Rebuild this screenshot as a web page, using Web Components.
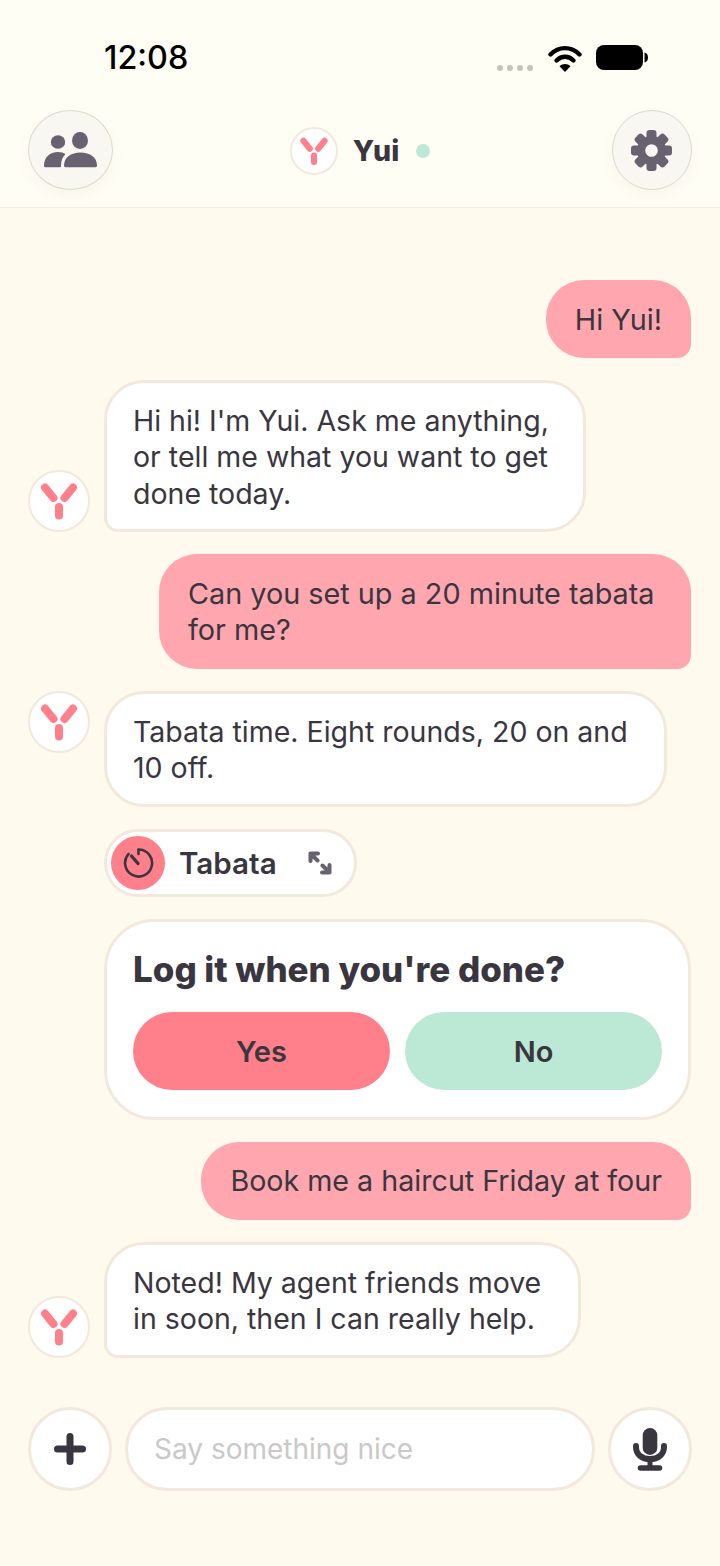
<!DOCTYPE html>
<html>
<head>
<meta charset="utf-8">
<style>
  html, body { margin: 0; padding: 0; }
  body {
    width: 720px;
    height: 1566px;
    overflow: hidden;
    background: #fff9ee;
    color: #3a3640;
    font-family: "Inter", "Liberation Sans", sans-serif;
  }
  chat-thread {
    display: flex;
    flex-direction: column;
    gap: 22px;
    padding: 72px 29px 49.500px 28px;
  }
</style>
</head>
<body>
  <top-bar></top-bar>
  <chat-thread>
    <chat-bubble from="user">Hi Yui!</chat-bubble>
    <bot-row avatar="end"><chat-bubble style="--w:482px" tail="bl">Hi hi! I'm Yui. Ask me anything, or tell me what you want to get done today.</chat-bubble></bot-row>
    <chat-bubble from="user" style="--w:532px">Can you set up a 20 minute tabata for me?</chat-bubble>
    <bot-row avatar="start"><chat-bubble style="--w:563px">Tabata time. Eight rounds, 20 on and 10 off.</chat-bubble></bot-row>
    <bot-row><tool-chip>Tabata</tool-chip></bot-row>
    <bot-row><log-card>Log it when you're done?</log-card></bot-row>
    <chat-bubble from="user" style="--fs:28.650px">Book me a haircut Friday at four</chat-bubble>
    <bot-row avatar="end"><chat-bubble style="--w:477px" tail="bl">Noted! My agent friends move in soon, then I can really help.</chat-bubble></bot-row>
  </chat-thread>
  <chat-composer></chat-composer>

<script>
class YuiAvatar extends HTMLElement {
  constructor () {
    super()
    this.shadow = this.attachShadow({ mode: 'open' })
  }
  connectedCallback () {
    this.shadow.innerHTML = /*html*/`
    <style>
      :host {
        display: block;
        flex: none;
        width: var(--size, 62px);
        height: var(--size, 62px);
        box-sizing: border-box;
        background: #fff;
        border: 2px solid #f2e9dc;
        border-radius: 50%;
      }
      svg { display: block; width: 100%; height: 100%; }
    </style>
    <svg viewBox="2 2 58 58" fill="none" stroke="#ff7f8a" stroke-width="8" stroke-linecap="round">
      <path d="M17 17.500 25.500 28"/>
      <path d="M45 17.500 36.500 28"/>
      <path d="M31 37V45.500"/>
    </svg>`
  }
}

class TopBar extends HTMLElement {
  constructor () {
    super()
    this.shadow = this.attachShadow({ mode: 'open' })
  }
  connectedCallback () {
    this.shadow.innerHTML = /*html*/`
    <style>
      :host {
        display: block;
        height: 207px;
        background: #fffef5;
        border-bottom: 1px solid #f3efe6;
      }
      .status {
        height: 110px;
        display: flex;
        justify-content: space-between;
        align-items: flex-start;
        padding: 0 72px 0 104px;
        box-sizing: border-box;
      }
      .time {
        margin-top: 39px;
        font-size: 32.300px;
        line-height: 38px;
        font-weight: 550;
        color: #000;
      }
      .sys { display: flex; align-items: flex-start; margin-top: 45px; }
      .dots { display: flex; gap: 4px; margin: 20px 15px 0 0; }
      .dots i { width: 6px; height: 6px; border-radius: 50%; background: #c5c5bb; }
      .wifi { margin-right: 14px; }
      .nav {
        display: flex;
        justify-content: space-between;
        align-items: center;
        padding: 0 28px;
        height: 80px;
      }
      .btn {
        width: 80px;
        height: 80px;
        box-sizing: border-box;
        border: 1px solid #dcdad0;
        border-radius: 50%;
        background: #f8f7f1;
        box-shadow: 0 6px 14px rgba(90, 80, 60, 0.05);
        display: flex;
        align-items: center;
        justify-content: center;
      }
      .btn.wide { width: 85px; }
      .title {
        display: flex;
        align-items: center;
        margin-left: -5px;
        margin-top: 1px;
        font-size: 28.500px;
        font-weight: 800;
        --size: 48px;
      }
      .title span { margin-left: 15px; }
      .title i { width: 14px; height: 14px; border-radius: 50%; background: #bce9d5; margin-left: 17px; }
    </style>
    <div class="status">
      <div class="time">12:08</div>
      <div class="sys">
        <div class="dots"><i></i><i></i><i></i><i></i></div>
        <svg class="wifi" width="34" height="27" viewBox="0 0 34 27" fill="none" stroke="#000" stroke-width="4.400" stroke-linecap="round">
          <path d="M2.500 9.500C10.500 1 23.500 1 31.500 9.500"/>
          <path d="M8.500 15.500C13.500 10.500 20.500 10.500 25.500 15.500"/>
          <path d="M17 27 11.500 21.200C14.500 18.400 19.500 18.400 22.500 21.200Z" fill="#000" stroke="none"/>
        </svg>
        <svg width="52" height="25" viewBox="0 0 52 25">
          <rect width="47" height="25" rx="8" fill="#000"/>
          <path d="M48.500 7.500C51 8.200 52 10 52 12.500S51 16.800 48.500 17.500Z" fill="#000"/>
        </svg>
      </div>
    </div>
    <div class="nav">
      <div class="btn wide">
        <svg width="54" height="36" viewBox="0 0 54 36" fill="#686170">
          <ellipse cx="14" cy="10" rx="7.200" ry="6.800"/>
          <ellipse cx="36" cy="8.500" rx="8" ry="8.500"/>
          <path d="M0 34C0 25 6 20 14 20C17 20 19.500 20.700 21.400 22C18.500 25 17 29 17 34C17 35 16.500 35.200 16 35.200H1C.3 35.200 0 34.800 0 34Z"/>
          <path d="M20 33.500C20 25.500 27 20.500 36.500 20.500S53 25.500 53 33.500C53 34.800 52.300 35.200 51.500 35.200H21.500C20.600 35.200 20 34.700 20 33.500Z"/>
        </svg>
      </div>
      <div class="title">
        <yui-avatar></yui-avatar>
        <span>Yui</span>
        <i></i>
      </div>
      <div class="btn">
        <svg width="41" height="41" viewBox="0 0 41 41" fill="#686170">
          <circle cx="20.500" cy="20.500" r="14.500"/>
          <rect x="15.500" y="0" width="10" height="41" rx="3"/>
          <rect x="15.500" y="0" width="10" height="41" rx="3" transform="rotate(45 20.500 20.500)"/>
          <rect x="15.500" y="0" width="10" height="41" rx="3" transform="rotate(90 20.500 20.500)"/>
          <rect x="15.500" y="0" width="10" height="41" rx="3" transform="rotate(135 20.500 20.500)"/>
          <circle cx="20.500" cy="20.500" r="6.300" fill="#f8f7f1"/>
        </svg>
      </div>
    </div>`
  }
}

class ChatBubble extends HTMLElement {
  constructor () {
    super()
    this.shadow = this.attachShadow({ mode: 'open' })
  }
  connectedCallback () {
    this.shadow.innerHTML = /*html*/`
    <style>
      :host {
        display: block;
        box-sizing: border-box;
        width: var(--w, fit-content);
        padding: 19.400px 26px 17.400px;
        background: #fff;
        border: 3px solid #f2e9dc;
        border-radius: 40px;
        font-size: 28.500px;
        line-height: 36.400px;
        color: #3a3640;
      }
      :host([tail="bl"]) { border-bottom-left-radius: 14px; }
      :host([from="user"]) {
        align-self: flex-end;
        padding: 21.700px 29px 20.300px;
        font-size: var(--fs, 28.800px);
        background: #ffa6ae;
        border: 0;
        border-radius: 38px 38px 14px 38px;
      }
    </style>
    <slot></slot>`
  }
}

class BotRow extends HTMLElement {
  constructor () {
    super()
    this.shadow = this.attachShadow({ mode: 'open' })
  }
  connectedCallback () {
    const place = this.getAttribute('avatar')
    this.shadow.innerHTML = /*html*/`
    <style>
      :host { display: flex; gap: 14px; align-items: ${place == 'start' ? 'flex-start' : 'flex-end'}; }
      .spacer { width: 62px; flex: none; }
    </style>
    ${place ? '<yui-avatar></yui-avatar>' : '<div class="spacer"></div>'}
    <slot></slot>`
  }
}

class ToolChip extends HTMLElement {
  constructor () {
    super()
    this.shadow = this.attachShadow({ mode: 'open' })
  }
  connectedCallback () {
    this.shadow.innerHTML = /*html*/`
    <style>
      :host {
        display: flex;
        align-items: center;
        box-sizing: border-box;
        width: 253px;
        height: 68px;
        padding: 0 22px 0 4px;
        background: #fff;
        border: 3px solid #f2e9dc;
        border-radius: 34px;
        font-size: 29.600px;
        font-weight: 600;
      }
      .icon {
        width: 54px;
        height: 54px;
        border-radius: 50%;
        background: #ff7f8a;
        display: flex;
        align-items: center;
        justify-content: center;
        flex: none;
      }
      .name { flex: 1; margin-left: 14px; }
    </style>
    <div class="icon">
      <svg width="32" height="32" viewBox="0 0 32 32" fill="none" stroke="#3a3640" stroke-width="2.600" stroke-linecap="round" stroke-linejoin="round">
        <path d="M16.500 2.500A13.500 13.500 0 1 1 6.500 7"/>
        <path d="M16.500 3V7"/>
        <path d="M9.500 9 16 16.500" stroke-width="3.400"/>
      </svg>
    </div>
    <div class="name"><slot></slot></div>
    <svg width="24" height="24" viewBox="0 0 24 24" fill="none" stroke="#686170" stroke-width="4" stroke-linecap="round" stroke-linejoin="round">
      <path d="M2.500 10V2.500H10M2.500 2.500 9.500 9.500"/>
      <path d="M21.500 14V21.500H14M21.500 21.500 14.500 14.500"/>
    </svg>`
  }
}

class LogCard extends HTMLElement {
  constructor () {
    super()
    this.shadow = this.attachShadow({ mode: 'open' })
  }
  connectedCallback () {
    this.shadow.innerHTML = /*html*/`
    <style>
      :host {
        display: block;
        box-sizing: border-box;
        width: 587px;
        height: 201px;
        padding: 26px 26px;
        background: #fff;
        border: 3px solid #f2e9dc;
        border-radius: 50px;
      }
      .title { font-size: 34.950px; line-height: 42px; font-weight: 800; white-space: nowrap; }
      .actions { display: grid; grid-template-columns: 1fr 1fr; gap: 15px; margin-top: 22px; }
      .actions div {
        box-sizing: border-box;
        height: 78px;
        padding-top: 2px;
        border-radius: 39px;
        display: flex;
        align-items: center;
        justify-content: center;
        font-size: 29px;
        font-weight: 600;
      }
      .yes { background: #ff7f8a; }
      .no { background: #bce9d5; }
    </style>
    <div class="title"><slot></slot></div>
    <div class="actions">
      <div class="yes">Yes</div>
      <div class="no">No</div>
    </div>`
  }
}

class ChatComposer extends HTMLElement {
  constructor () {
    super()
    this.shadow = this.attachShadow({ mode: 'open' })
  }
  connectedCallback () {
    this.shadow.innerHTML = /*html*/`
    <style>
      :host {
        display: flex;
        gap: 13px;
        padding: 0 28px;
        height: 84px;
      }
      .round, .input {
        box-sizing: border-box;
        height: 84px;
        background: #fff;
        border: 3px solid #f2e9dc;
        display: flex;
        align-items: center;
      }
      .round { width: 84px; border-radius: 50%; justify-content: center; flex: none; }
      .input {
        flex: 1;
        border-radius: 42px;
        padding-left: 26px;
        font-size: 28px;
        color: #c9c9c9;
      }
    </style>
    <div class="round">
      <svg width="32" height="32" viewBox="0 0 32 32" stroke="#3a3640" stroke-width="7" stroke-linecap="round">
        <path d="M16 3.500V28.500M3.500 16H28.500"/>
      </svg>
    </div>
    <div class="input">Say something nice</div>
    <div class="round">
      <svg width="34" height="43" viewBox="0 0 34 43" fill="none" stroke="#3a3640" stroke-linecap="round">
        <rect x="9.700" y="0" width="14.600" height="27" rx="7.300" fill="#3a3640" stroke="none"/>
        <path d="M3 18V19C3 26.500 9 31 17 31S31 26.500 31 19V18" stroke-width="6"/>
        <path d="M17 31V38" stroke-width="5"/>
        <path d="M7.500 40H26.500" stroke-width="5.600"/>
      </svg>
    </div>`
  }
}

customElements.define('yui-avatar', YuiAvatar)
customElements.define('top-bar', TopBar)
customElements.define('chat-bubble', ChatBubble)
customElements.define('bot-row', BotRow)
customElements.define('tool-chip', ToolChip)
customElements.define('log-card', LogCard)
customElements.define('chat-composer', ChatComposer)
</script>
</body>
</html>
